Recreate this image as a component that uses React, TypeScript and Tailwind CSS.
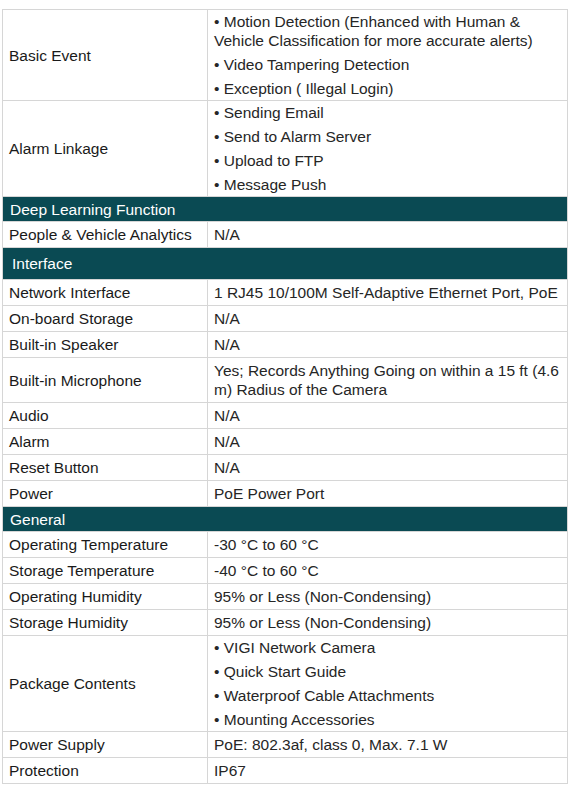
type Row =
  | { kind: "section"; title: string; tall?: boolean }
  | { kind: "row"; label: string; value?: string; items?: string[] };

const rows: Row[] = [
  {
    kind: "row",
    label: "Basic Event",
    items: [
      "Motion Detection (Enhanced with Human & Vehicle Classification for more accurate alerts)",
      "Video Tampering Detection",
      "Exception ( Illegal Login)",
    ],
  },
  {
    kind: "row",
    label: "Alarm Linkage",
    items: ["Sending Email", "Send to Alarm Server", "Upload to FTP", "Message Push"],
  },
  { kind: "section", title: "Deep Learning Function" },
  { kind: "row", label: "People & Vehicle Analytics", value: "N/A" },
  { kind: "section", title: "Interface", tall: true },
  { kind: "row", label: "Network Interface", value: "1 RJ45 10/100M Self-Adaptive Ethernet Port, PoE" },
  { kind: "row", label: "On-board Storage", value: "N/A" },
  { kind: "row", label: "Built-in Speaker", value: "N/A" },
  {
    kind: "row",
    label: "Built-in Microphone",
    value: "Yes; Records Anything Going on within a 15 ft (4.6 m) Radius of the Camera",
  },
  { kind: "row", label: "Audio", value: "N/A" },
  { kind: "row", label: "Alarm", value: "N/A" },
  { kind: "row", label: "Reset Button", value: "N/A" },
  { kind: "row", label: "Power", value: "PoE Power Port" },
  { kind: "section", title: "General" },
  { kind: "row", label: "Operating Temperature", value: "-30 °C to 60 °C" },
  { kind: "row", label: "Storage Temperature", value: "-40 °C to 60 °C" },
  { kind: "row", label: "Operating Humidity", value: "95% or Less (Non-Condensing)" },
  { kind: "row", label: "Storage Humidity", value: "95% or Less (Non-Condensing)" },
  {
    kind: "row",
    label: "Package Contents",
    items: ["VIGI Network Camera", "Quick Start Guide", "Waterproof Cable Attachments", "Mounting Accessories"],
  },
  { kind: "row", label: "Power Supply", value: "PoE: 802.3af, class 0, Max. 7.1 W" },
  { kind: "row", label: "Protection", value: "IP67" },
];

export default function App() {
  return (
    <div className="bg-white w-[570px] min-h-[790px] pt-[9px] px-[2px] font-['Liberation_Sans',Arial,sans-serif] text-[15.5px] leading-[19px] text-[#1a1a1a]">
      <table className="w-[566px] border-collapse table-fixed">
        <colgroup>
          <col className="w-[205px]" />
          <col />
        </colgroup>
        <tbody>
          {rows.map((r, i) =>
            r.kind === "section" ? (
              <tr key={i} className="bg-[#0a4a53] text-white">
                <td
                  colSpan={2}
                  className={`border border-[#d6d6d6] ${r.tall ? "h-[32px] pl-[9px]" : "h-[25px] pl-[7px]"}`}
                >
                  {r.title}
                </td>
              </tr>
            ) : (
              <tr key={i}>
                <td className="border border-[#d6d6d6] pl-[6px] py-[3px] align-middle">{r.label}</td>
                <td className="border border-[#d6d6d6] pl-[6px] pr-[4px] py-[3px] align-middle text-[#262626]">
                  {r.items ? (
                    <div className="flex flex-col gap-[5px] -my-[1px]">
                      {r.items.map((it) => (
                        <div key={it}>• {it}</div>
                      ))}
                    </div>
                  ) : (
                    r.value
                  )}
                </td>
              </tr>
            )
          )}
        </tbody>
      </table>
    </div>
  );
}
